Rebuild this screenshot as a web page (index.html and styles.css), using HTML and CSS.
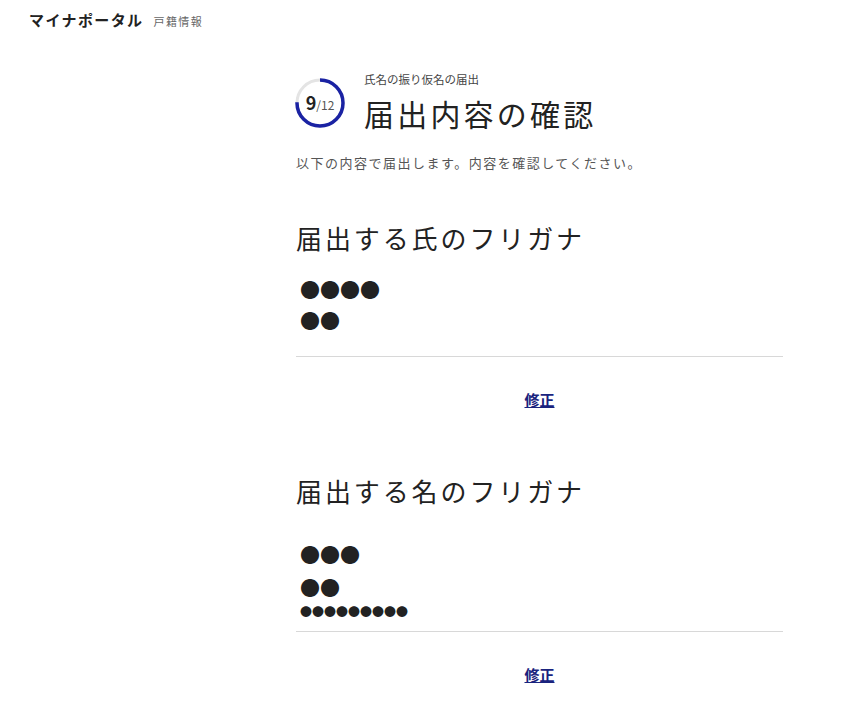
FILE: index.html
```html
<!DOCTYPE html>
<html lang="ja">
<head>
    <meta charset="UTF-8">
    <meta name="viewport" content="width=device-width, initial-scale=1.0">
    <title>届出内容の確認 | マイナポータル</title>
    <link rel="stylesheet" href="styles.css">
</head>
<body>
    <header class="site-header">
        <span class="site-name">マイナポータル</span>
        <span class="site-section">戸籍情報</span>
    </header>

    <div class="page">
        <div class="side"></div>

        <main class="content">
            <div class="step-head">
                <div class="progress">
                    <svg width="50" height="50" viewBox="0 0 50 50">
                        <circle cx="25" cy="25" r="23" fill="none" stroke="#e4e4e4" stroke-width="3"/>
                        <!-- 9 / 12 = 75% -->
                        <circle cx="25" cy="25" r="23" fill="none" stroke="#1a22a3" stroke-width="3.5"
                                stroke-dasharray="108.4 144.5" transform="rotate(-90 25 25)"/>
                    </svg>
                    <span class="progress-text"><b>9</b>/12</span>
                </div>
                <div class="step-titles">
                    <p class="step-sub">氏名の振り仮名の届出</p>
                    <h1 class="step-title">届出内容の確認</h1>
                </div>
            </div>

            <p class="lead">以下の内容で届出します。内容を確認してください。</p>

            <section class="confirm-block first">
                <h2>届出する氏のフリガナ</h2>
                <div class="values">
                    <div class="value">●●●●</div>
                    <div class="value">●●</div>
                </div>
                <div class="edit"><a href="#">修正</a></div>
            </section>

            <section class="confirm-block second">
                <h2>届出する名のフリガナ</h2>
                <div class="values">
                    <div class="value">●●●</div>
                    <div class="value">●●</div>
                    <div class="value small">●●●●●●●●●</div>
                </div>
                <div class="edit"><a href="#">修正</a></div>
            </section>
        </main>
    </div>
</body>
</html>
```

FILE: styles.css
```css
body {
    font-family: "Noto Sans CJK JP", "Noto Sans", sans-serif;
    margin: 0;
    padding: 0;
    background-color: #fff;
    color: #222;
}

.site-header {
    display: flex;
    align-items: baseline;
    gap: 10px;
    height: 40px;
    padding: 9px 0 0 29px;
    box-sizing: border-box;
}

.site-name {
    font-size: 15px;
    font-weight: bold;
    letter-spacing: 1.4px;
}

.site-section {
    font-size: 11px;
    color: #666;
    letter-spacing: 1.4px;
}

.page {
    display: flex;
}

.side {
    width: 296px;
    flex-shrink: 0;
}

.content {
    width: 487px;
}

.step-head {
    display: flex;
    align-items: flex-start;
    gap: 19px;
    margin-top: 31px;
}

.progress {
    position: relative;
    width: 50px;
    height: 50px;
    margin-top: 7px;
    margin-left: -1px;
}

.progress svg {
    display: block;
}

.progress-text {
    position: absolute;
    left: 0;
    right: 0;
    top: 14px;
    text-align: center;
    font-size: 12px;
    color: #555;
    line-height: 20px;
}

.progress-text b {
    font-size: 18px;
    color: #222;
}

.step-sub {
    margin: 0;
    font-size: 11.5px;
    line-height: 16px;
    color: #444;
}

.step-title {
    margin: 5px 0 0;
    font-size: 30px;
    font-weight: normal;
    line-height: 42px;
    letter-spacing: 3.2px;
}

.lead {
    margin: 19px 0 0;
    font-size: 13px;
    line-height: 20px;
    letter-spacing: 1.5px;
    color: #555;
}

.confirm-block h2 {
    margin: 0;
    font-size: 26px;
    font-weight: normal;
    line-height: 36px;
    letter-spacing: 2.9px;
}

.confirm-block.first {
    margin-top: 47px;
}

.confirm-block.second {
    margin-top: 63px;
}

.values {
    border-bottom: 1px solid #d8d8d8;
    padding-left: 4px;
}

.first .values {
    margin-top: 18px;
    padding-bottom: 20px;
}

.second .values {
    margin-top: 29px;
    padding-bottom: 11px;
}

.value {
    font-size: 20px;
    line-height: 31px;
}

.second .value {
    line-height: 33px;
}

.second .value.small {
    font-size: 12px;
    line-height: 16px;
    margin-top: 0;
}

.edit {
    text-align: center;
    margin-top: 33px;
    font-size: 15px;
    line-height: 20px;
}

.edit a {
    color: #1a237e;
    font-weight: bold;
}
```
